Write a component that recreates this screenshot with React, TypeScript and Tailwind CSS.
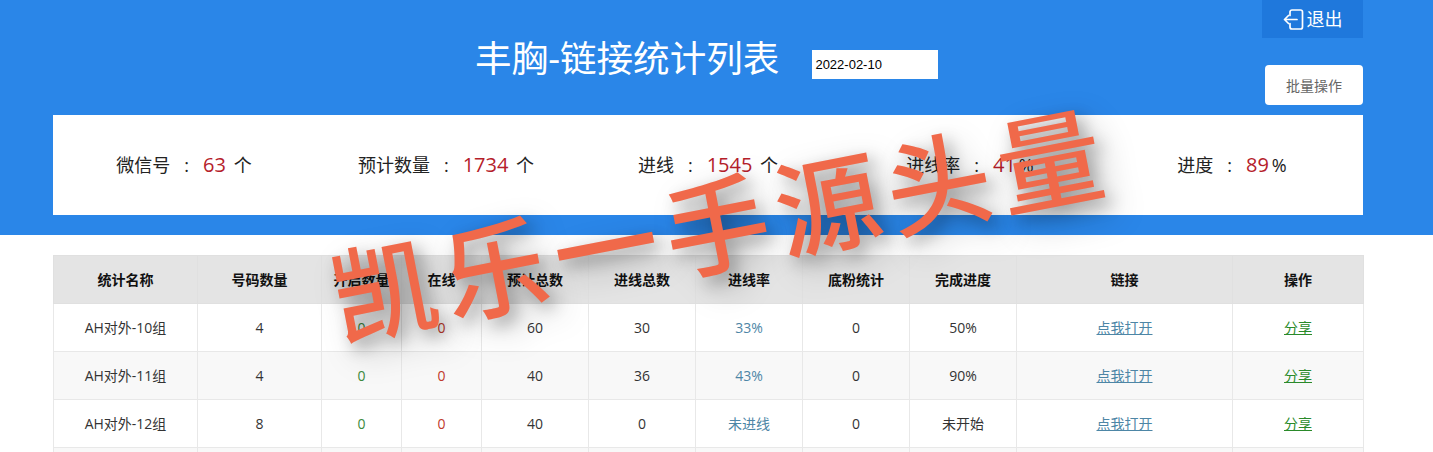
interface RowData {
  name: string;
  numbers: number;
  open: number;
  online: number;
  expected: number;
  incoming: number;
  rate: string;
  base: number;
  progress: string;
}

const columns = [
  { label: '统计名称', width: 'w-[144px]' },
  { label: '号码数量', width: 'w-[124px]' },
  { label: '开启数量', width: 'w-[80px]' },
  { label: '在线', width: 'w-[80px]' },
  { label: '预计总数', width: 'w-[107px]' },
  { label: '进线总数', width: 'w-[107px]' },
  { label: '进线率', width: 'w-[107px]' },
  { label: '底粉统计', width: 'w-[107px]' },
  { label: '完成进度', width: 'w-[107px]' },
  { label: '链接', width: 'w-[216px]' },
  { label: '操作', width: 'w-[131px]' },
];

const rows: RowData[] = [
  { name: 'AH对外-10组', numbers: 4, open: 0, online: 0, expected: 60, incoming: 30, rate: '33%', base: 0, progress: '50%' },
  { name: 'AH对外-11组', numbers: 4, open: 0, online: 0, expected: 40, incoming: 36, rate: '43%', base: 0, progress: '90%' },
  { name: 'AH对外-12组', numbers: 8, open: 0, online: 0, expected: 40, incoming: 0, rate: '未进线', base: 0, progress: '未开始' },
];

const stats = [
  { label: '微信号', value: '63', unit: ' 个' },
  { label: '预计数量', value: '1734', unit: ' 个' },
  { label: '进线', value: '1545', unit: ' 个' },
  { label: '进线率', value: '41', unit: '%' },
  { label: '进度', value: '89', unit: '%' },
];

function ExitIcon() {
  return (
    <svg viewBox="0 0 21 21" className="h-[21px] w-[21px]" fill="none" stroke="currentColor" strokeWidth="1.7" strokeLinecap="round" strokeLinejoin="round">
      <path d="M7 6.5V3a2 2 0 0 1 2-2h8.5a2 2 0 0 1 2 2v15a2 2 0 0 1-2 2H9a2 2 0 0 1-2-2v-3.5" />
      <path d="M14 10.5H1.5M5.5 6.5l-4 4 4 4" />
    </svg>
  );
}

export default function App() {
  return (
    <div className="relative h-[452px] overflow-hidden bg-white font-['Open_Sans','Noto_Sans_CJK_SC',sans-serif] text-[#333]">
      <header className="h-[235px] bg-[#2a86e8] pr-[70px] pl-[53px]">
        <div className="flex h-[115px] justify-between">
          <div className="ml-[422px] flex items-start pt-[37px]">
            <h1 className="text-[36.6px] leading-[42px] font-normal text-white">丰胸-链接统计列表</h1>
            <input
              readOnly
              value="2022-02-10"
              className="mt-[13px] ml-[33px] h-[29px] w-[126px] bg-white px-[3px] font-['Liberation_Sans',sans-serif] text-[13px] text-black"
            />
          </div>
          <div className="flex flex-col items-end">
            <button className="flex h-[38px] w-[101px] items-center justify-center gap-[3px] bg-[#1f78dc] text-[18px] text-white">
              <ExitIcon />
              退出
            </button>
            <button className="mt-[27px] h-[40px] w-[98px] rounded-[4px] bg-white text-[14px] text-[#666]">批量操作</button>
          </div>
        </div>
        <div className="grid h-[100px] grid-cols-5 items-center bg-white text-center text-[18px] text-[#222]">
          {stats.map((stat) => (
            <p key={stat.label}>
              {stat.label}
              <span className="mx-[14px]">:</span>
              <span className="mr-[3px] text-[20px] text-[#b5202a]">{stat.value}</span>
              {stat.unit}
            </p>
          ))}
        </div>
      </header>

      <div className="px-[53px] pt-[20px]">
        <table className="w-[1310px] table-fixed border-collapse text-center text-[14px]">
          <thead>
            <tr className="h-[48px] bg-[#e4e4e4]">
              {columns.map((col) => (
                <th key={col.label} className={`${col.width} border border-[#e0e0e0] font-bold text-[#111]`}>
                  {col.label}
                </th>
              ))}
            </tr>
          </thead>
          <tbody>
            {rows.map((row, i) => (
              <tr key={row.name} className={`h-[48px] ${i % 2 === 1 ? 'bg-[#f8f8f8]' : 'bg-white'}`}>
                <td className="border border-[#e8e8e8]">{row.name}</td>
                <td className="border border-[#e8e8e8]">{row.numbers}</td>
                <td className="border border-[#e8e8e8] text-[#3c8a3c]">{row.open}</td>
                <td className="border border-[#e8e8e8] text-[#c0392b]">{row.online}</td>
                <td className="border border-[#e8e8e8]">{row.expected}</td>
                <td className="border border-[#e8e8e8]">{row.incoming}</td>
                <td className="border border-[#e8e8e8] text-[#4d86a6]">{row.rate}</td>
                <td className="border border-[#e8e8e8]">{row.base}</td>
                <td className="border border-[#e8e8e8]">{row.progress}</td>
                <td className="border border-[#e8e8e8]">
                  <a className="text-[#4d86a6] underline">点我打开</a>
                </td>
                <td className="border border-[#e8e8e8]">
                  <a className="text-[#2a8a2a] underline">分享</a>
                </td>
              </tr>
            ))}
            <tr className="h-[48px] bg-[#f8f8f8]">
              {columns.map((col) => (
                <td key={col.label} className="border border-[#e8e8e8]" />
              ))}
            </tr>
          </tbody>
        </table>
      </div>

      {/* watermark pasted over the page */}
      <div className="pointer-events-none absolute inset-0 flex items-center justify-center">
        <span className="translate-x-[4px] -translate-y-[2px] rotate-[-11deg] text-[105px] leading-none font-medium tracking-[8px] whitespace-nowrap text-[#f0694a] [text-shadow:5px_8px_16px_rgba(0,0,0,0.3),10px_14px_34px_rgba(0,0,0,0.28)]">
          凯乐一手源头量
        </span>
      </div>
    </div>
  );
}
